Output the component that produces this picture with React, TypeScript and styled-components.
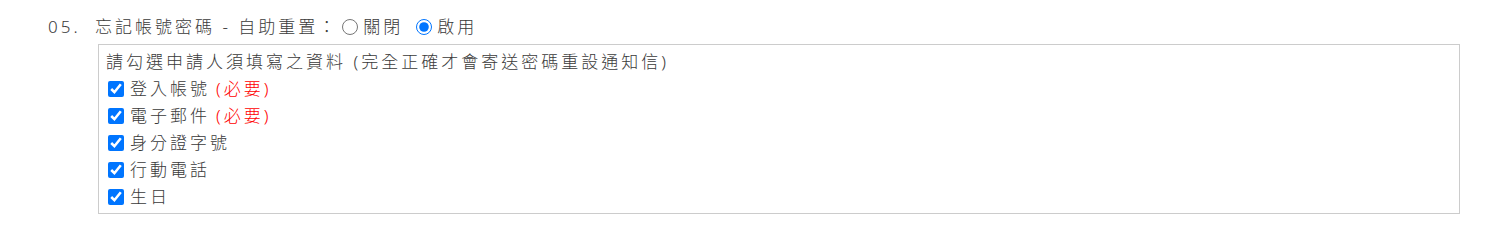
import React from 'react';
import styled, { createGlobalStyle } from 'styled-components';

const GlobalStyle = createGlobalStyle`
  body {
    margin: 0;
    background: #fff;
    font-family: "Noto Sans", "Noto Sans CJK TC", sans-serif;
    color: #3a3a3a;
  }
`;

const Section = styled.div`
  padding: 13px 44px 0 48px;
  font-size: 17px;
  font-weight: 300;
  letter-spacing: 3px;
  line-height: 27px;
`;

const Header = styled.div`
  display: flex;
  align-items: center;
  height: 27px;
  margin-bottom: 4px;
`;

const Num = styled.span`
  width: 47px;
  flex: none;
`;

const Title = styled.span`
  margin-right: 4px;
`;

const RadioLabel = styled.label`
  display: inline-flex;
  align-items: center;
  margin-right: 13px;
`;

const Radio = styled.input.attrs({ type: 'radio' })`
  width: 16px;
  height: 16px;
  margin: 0 5px 0 0;
`;

const Box = styled.div`
  margin-left: 50px;
  border: 1px solid #ccc;
  padding: 3px 7px;
`;

const Line = styled.div`
  height: 27px;
`;

const CheckRow = styled.label`
  display: flex;
  align-items: center;
  height: 27px;
`;

const Check = styled.input.attrs({ type: 'checkbox' })`
  width: 16px;
  height: 16px;
  margin: 0 6px 0 2px;
`;

const Required = styled.span`
  color: #f00;
  margin-left: 6px;
`;

const fields = [
  { name: '登入帳號', required: true },
  { name: '電子郵件', required: true },
  { name: '身分證字號', required: false },
  { name: '行動電話', required: false },
  { name: '生日', required: false },
];

export default function App() {
  return (
    <>
      <GlobalStyle />
      <Section>
        <Header>
          <Num>05.</Num>
          <Title>忘記帳號密碼 - 自助重置：</Title>
          <RadioLabel>
            <Radio name="reset" />
            關閉
          </RadioLabel>
          <RadioLabel>
            <Radio name="reset" defaultChecked />
            啟用
          </RadioLabel>
        </Header>
        <Box>
          <Line>請勾選申請人須填寫之資料 (完全正確才會寄送密碼重設通知信)</Line>
          {fields.map((f) => (
            <CheckRow key={f.name}>
              <Check defaultChecked />
              {f.name}
              {f.required && <Required>(必要)</Required>}
            </CheckRow>
          ))}
        </Box>
      </Section>
    </>
  );
}
